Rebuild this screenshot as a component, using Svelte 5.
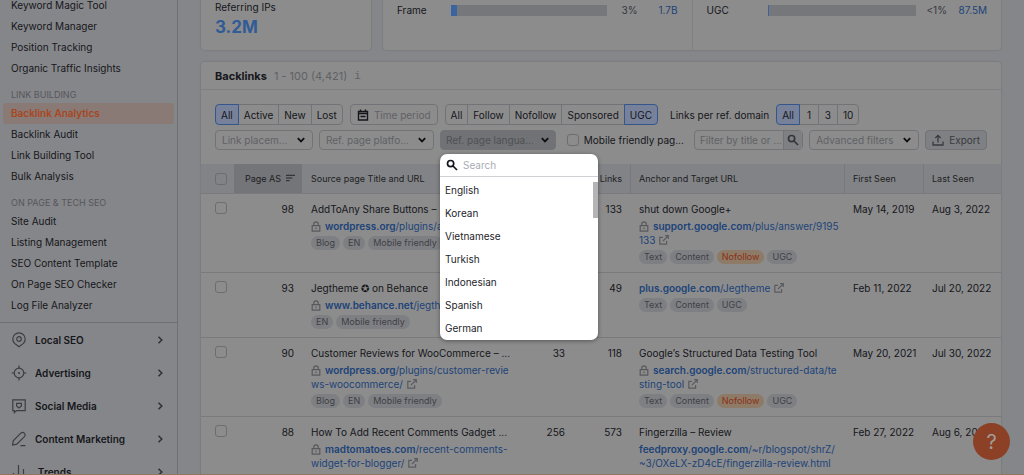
<script lang="ts">
  const navGroups = [
    { title: '', items: ['Keyword Magic Tool', 'Keyword Manager', 'Position Tracking', 'Organic Traffic Insights'] },
    { title: 'LINK BUILDING', items: ['Backlink Analytics', 'Backlink Audit', 'Link Building Tool', 'Bulk Analysis'] },
    {
      title: 'ON PAGE & TECH SEO',
      items: ['Site Audit', 'Listing Management', 'SEO Content Template', 'On Page SEO Checker', 'Log File Analyzer']
    }
  ];
  const activeItem = 'Backlink Analytics';

  const toolkits = [
    { name: 'Local SEO', icon: 'pin' },
    { name: 'Advertising', icon: 'target' },
    { name: 'Social Media', icon: 'chat' },
    { name: 'Content Marketing', icon: 'pencil' },
    { name: '.Trends', icon: 'bars' }
  ];

  const shares = [
    { label: 'Frame', share: 4, percent: '3%', total: '1.7B' },
    { label: 'UGC', share: 1, percent: '<1%', total: '87.5M' }
  ];

  const languages = ['English', 'Korean', 'Vietnamese', 'Turkish', 'Indonesian', 'Spanish', 'German'];

  const rows = [
    {
      score: 98,
      title: 'AddToAny Share Buttons –',
      domain: 'wordpress.org',
      path: '/plugins/a',
      secure: true,
      external: '',
      links: '133',
      tags: ['Blog', 'EN', 'Mobile friendly'],
      anchor: 'shut down Google+',
      targetDomain: 'support.google.com',
      targetPath: '/plus/answer/9195133',
      targetSecure: true,
      targetTags: ['Text', 'Content', 'Nofollow', 'UGC'],
      first: 'May 14, 2019',
      last: 'Aug 3, 2022'
    },
    {
      score: 93,
      title: 'Jegtheme ✪ on Behance',
      domain: 'www.behance.net',
      path: '/jegth',
      secure: true,
      external: '',
      links: '49',
      tags: ['EN', 'Mobile friendly'],
      anchor: '',
      targetDomain: 'plus.google.com',
      targetPath: '/Jegtheme',
      targetSecure: false,
      targetTags: ['Text', 'Content', 'UGC'],
      first: 'Feb 11, 2022',
      last: 'Jul 20, 2022'
    },
    {
      score: 90,
      title: 'Customer Reviews for WooCommerce – ...',
      domain: 'wordpress.org',
      path: '/plugins/customer-reviews-woocommerce/',
      secure: true,
      external: '33',
      links: '118',
      tags: ['Blog', 'EN', 'Mobile friendly'],
      anchor: 'Google’s Structured Data Testing Tool',
      targetDomain: 'search.google.com',
      targetPath: '/structured-data/testing-tool',
      targetSecure: true,
      targetTags: ['Text', 'Content', 'Nofollow', 'UGC'],
      first: 'May 20, 2021',
      last: 'Jul 30, 2022'
    },
    {
      score: 88,
      title: 'How To Add Recent Comments Gadget ...',
      domain: 'madtomatoes.com',
      path: '/recent-comments-widget-for-blogger/',
      secure: true,
      external: '256',
      links: '573',
      tags: [],
      anchor: 'Fingerzilla – Review',
      targetDomain: 'feedproxy.google.com',
      targetPath: '/~r/blogspot/shrZ/~3/OXeLX-zD4cE/fingerzilla-review.html',
      targetSecure: false,
      targetTags: [],
      first: 'Feb 27, 2022',
      last: 'Aug 6, 2022'
    }
  ];

  let status = $state('All');
  let follow = $state('UGC');
  let perDomain = $state('All');
  let languageOpen = $state(true);
</script>

{#snippet chevron()}
  <svg class="chevron" viewBox="0 0 10 10" aria-hidden="true"><path d="M1.8 3.2 5 6.5 8.2 3.2" /></svg>
{/snippet}

{#snippet magnifier()}
  <svg class="magnifier" viewBox="0 0 12 12" aria-hidden="true">
    <circle cx="4.6" cy="4.6" r="3.1" /><path d="M7 7l4 4" />
  </svg>
{/snippet}

{#snippet segments(label: string, options: string[], current: string, pick: (value: string) => void)}
  <div class="segments" role="group" aria-label={label}>
    {#each options as option}
      <button class:selected={option === current} aria-pressed={option === current} onclick={() => pick(option)}>
        {option}
      </button>
    {/each}
  </div>
{/snippet}

{#snippet picker(label: string)}
  <div class="picker">
    <select aria-label={label}><option>{label}</option></select>
    {@render chevron()}
  </div>
{/snippet}

{#snippet pageLink(domain: string, path: string, secure: boolean, external: boolean)}
  <div class="url">
    {#if secure}<svg class="lock" viewBox="0 0 10 11" aria-hidden="true"
        ><path d="M2.8 4.5V3a2.2 2.2 0 0 1 4.4 0v1.5M1.2 4.6h7.6v5.6H1.2zM5 6.4v1.8" /></svg
      >{/if}<a href="#top"><b>{domain}</b>{path}</a>{#if external}<svg class="out" viewBox="0 0 10 10" aria-hidden="true"
        ><path d="M4 2.4H.8v6.8h6.8V6M6 .7h3.3V4M9.2.8 4 6" /></svg
      >{/if}
  </div>
{/snippet}

{#snippet tagList(tags: string[])}
  <div class="tags">
    {#each tags as tag}
      <span class="tag" class:warn={tag === 'Nofollow'}>{tag}</span>
    {/each}
  </div>
{/snippet}

<div class="app" id="top">
  <nav class="sidebar" aria-label="Tools">
    <div class="groups">
      {#each navGroups as group}
        {#if group.title}<h2>{group.title}</h2>{/if}
        {#each group.items as item}
          <a href="#top" class:active={item === activeItem}>{item}</a>
        {/each}
      {/each}
    </div>
    {#each toolkits as kit}
      <button class="toolkit">
        <svg class="kit-icon" viewBox="0 0 16 16" aria-hidden="true">
          {#if kit.icon === 'pin'}
            <path d="M8 14.8 3.6 11.4A6.2 6.2 0 1 1 12.4 11.4z" />
            <circle cx="8" cy="7" r="2.3" />
          {:else if kit.icon === 'target'}
            <circle cx="8" cy="8" r="4.8" />
            <path d="M8 .6v3M8 12.4v3M.6 8h3M12.4 8h3" />
            <circle class="solid" cx="8" cy="8" r="1" />
          {:else if kit.icon === 'chat'}
            <path d="M1.8 1.8h12.4v10.8H5.5L3.4 14.6v-2H1.8z" />
            <path d="M8 10 5.6 8V5.4h4.8V8z" />
          {:else if kit.icon === 'pencil'}
            <path d="M1.6 14 2.2 9.8 9.8 2.2a2.4 2.4 0 0 1 3.6 3.4L5.8 13.2zM9.4 14.6h5" />
          {:else}
            <path d="M2.5 9v6M7.5 1v14M12.5 5v10" />
          {/if}
        </svg>
        <span>{kit.name}</span>
        <svg class="arrow" viewBox="0 0 10 10" aria-hidden="true"><path d="M3.5 1.8 6.8 5 3.5 8.2" /></svg>
      </button>
    {/each}
  </nav>

  <main>
    <div class="summary">
      <section class="card ips">
        <span>Referring IPs</span>
        <strong>3.2M</strong>
      </section>
      <section class="card shares">
        {#each shares as item}
          <div class="share">
            <span class="name">{item.label}</span>
            <span class="bar"><span class="fill" style="width: {item.share}%"></span></span>
            <span class="percent">{item.percent}</span>
            <a href="#top">{item.total}</a>
          </div>
        {/each}
      </section>
    </div>

    <section class="card backlinks">
      <header>
        <h1>Backlinks</h1>
        <span class="count">1 - 100 (4,421)</span>
        <span class="info">i</span>
      </header>

      <div class="filters">
        <div class="filter-row">
          {@render segments('Status', ['All', 'Active', 'New', 'Lost'], status, (v) => (status = v))}
          <button class="period">
            <svg viewBox="0 0 12 12" aria-hidden="true">
              <path d="M1.5 2.5h9V11h-9zM1.5 4.5h9M3.5.5V3M8.5.5V3M3.5 7.5h5" />
            </svg>
            Time period
          </button>
          {@render segments('Link type', ['All', 'Follow', 'Nofollow', 'Sponsored', 'UGC'], follow, (v) => (follow = v))}
          <span class="label">Links per ref. domain</span>
          {@render segments('Links per domain', ['All', '1', '3', '10'], perDomain, (v) => (perDomain = v))}
        </div>
        <div class="filter-row second">
          {@render picker('Link placem...')}
          {@render picker('Ref. page platfo...')}
          <div class="language">
            <button class="trigger" aria-expanded={languageOpen} onclick={() => (languageOpen = !languageOpen)}>
              <span>Ref. page langua...</span>
              {@render chevron()}
            </button>
            {#if languageOpen}
              <div class="menu">
                <label class="menu-search">
                  {@render magnifier()}
                  <input type="text" placeholder="Search" aria-label="Search" />
                </label>
                <div class="options" role="listbox" aria-label="Language">
                  {#each languages as language}
                    <button role="option" aria-selected="false">{language}</button>
                  {/each}
                  <span class="thumb"></span>
                </div>
              </div>
            {/if}
          </div>
          <label class="mobile"><input type="checkbox" />Mobile friendly pag...</label>
          <div class="find">
            <input type="text" placeholder="Filter by title or ..." aria-label="Filter by title or URL" />
            <button aria-label="Search">{@render magnifier()}</button>
          </div>
          {@render picker('Advanced filters')}
          <button class="export">
            <svg viewBox="0 0 12 12" aria-hidden="true">
              <path d="M1 7.5V11h10V7.5M6 8.5v-7M3.3 4 6 1.3 8.7 4" />
            </svg>
            Export
          </button>
        </div>
      </div>

      <table>
        <colgroup>
          <col class="c-check" /><col class="c-score" /><col /><col class="c-num" /><col class="c-num" /><col />
          <col class="c-first" /><col class="c-last" />
        </colgroup>
        <thead>
          <tr>
            <th class="check"><input type="checkbox" aria-label="Select all" /></th>
            <th class="sorted">
              Page AS
              <svg viewBox="0 0 10 8" aria-hidden="true"><path d="M0 1h10M0 4h7M0 7h4" /></svg>
            </th>
            <th>Source page Title and URL</th>
            <th class="num"></th>
            <th class="num">Links</th>
            <th class="divided">Anchor and Target URL</th>
            <th class="divided">First Seen</th>
            <th class="divided">Last Seen</th>
          </tr>
        </thead>
        <tbody>
          {#each rows as row}
            <tr>
              <td class="check"><input type="checkbox" aria-label="Select row" /></td>
              <td class="num">{row.score}</td>
              <td>
                <div class="title">{row.title}</div>
                {@render pageLink(row.domain, row.path, row.secure, row.external !== '')}
                {@render tagList(row.tags)}
              </td>
              <td class="num">{row.external}</td>
              <td class="num">{row.links}</td>
              <td>
                {#if row.anchor}<div class="title">{row.anchor}</div>{/if}
                {@render pageLink(row.targetDomain, row.targetPath, row.targetSecure, row.targetTags.length > 0)}
                {@render tagList(row.targetTags)}
              </td>
              <td class="date">{row.first}</td>
              <td class="date">{row.last}</td>
            </tr>
          {/each}
        </tbody>
      </table>
    </section>
  </main>

  <button class="help" aria-label="Help">?</button>
</div>

<style>
  :global(body) {
    background: #858689;
  }

  .app {
    --text: #15161b;
    --muted: #606165;
    --link: #1c4379;
    --line: #7a7a7c;
    --border: #727376;
    --surface: #8c8c8c;
    display: flex;
    height: 100vh;
    overflow: hidden;
    box-sizing: border-box;
    border-bottom: 1px solid #927660;
    color: var(--text);
    font: 10px/14px Inter, sans-serif;
  }

  button,
  input,
  select {
    box-sizing: border-box;
    margin: 0;
    padding: 0;
    border: 0;
    background: none;
    color: inherit;
    font: inherit;
  }

  a {
    color: var(--link);
    text-decoration: none;
  }

  svg {
    flex: none;
    fill: none;
    stroke: currentColor;
  }

  input[type='checkbox'] {
    appearance: none;
    flex: none;
    width: 12px;
    height: 12px;
    border: 1px solid #6c6d70;
    border-radius: 3px;
  }

  ::placeholder {
    color: var(--muted);
    opacity: 1;
  }

  .sidebar {
    flex: none;
    width: 177px;
    border-right: 1px solid #6f7073;
  }

  .groups {
    margin-top: -5px;
    padding: 0 3px 6px;
    border-bottom: 1px solid #6f7073;
  }

  .groups a {
    display: block;
    padding: 0 8px;
    border-radius: 3px;
    color: var(--text);
    line-height: 21px;
  }

  .groups a.active {
    background: #897a75;
    color: #a8461f;
    font-weight: 600;
  }

  .groups h2 {
    margin: 0;
    padding: 9px 8px 2px;
    color: #56575c;
    font-size: 9px;
    font-weight: 400;
    line-height: 13px;
  }

  .toolkit {
    display: flex;
    align-items: center;
    gap: 8px;
    width: 100%;
    height: 33px;
    padding: 0 12px 0 11px;
    font-weight: 600;
    text-align: left;
  }

  .toolkit span {
    flex: 1;
  }

  .kit-icon {
    width: 16px;
    height: 16px;
    color: #3c3d43;
    stroke-width: 1.2;
  }

  .kit-icon .solid {
    fill: currentColor;
    stroke: none;
  }

  .arrow {
    width: 10px;
    height: 10px;
    color: #2f3036;
    stroke-width: 1.5;
  }

  main {
    flex: 1;
    min-width: 0;
    padding: 0 23px;
  }

  .card {
    background: var(--surface);
    border-radius: 4px;
    box-shadow: 0 0 1px 1px rgba(20, 22, 30, 0.08);
  }

  .summary {
    display: flex;
    gap: 12px;
    height: 50px;
    margin-bottom: 12px;
  }

  .summary .card {
    border-radius: 0 0 4px 4px;
  }

  .ips {
    width: 170px;
    box-sizing: border-box;
    padding-left: 14px;
  }

  .ips span,
  .ips strong {
    display: block;
  }

  .ips strong {
    color: #315b96;
    font-size: 17px;
    font-weight: 700;
    line-height: 27px;
  }

  .shares {
    flex: 1;
    display: flex;
  }

  .share {
    flex: 1;
    display: flex;
    align-items: center;
    height: 20px;
    padding: 0 14px;
  }

  .share + .share {
    height: auto;
    padding-bottom: 30px;
    border-left: 1px solid #808083;
  }

  .share .name {
    width: 54px;
  }

  .share + .share .name {
    width: 61px;
  }

  .bar {
    flex: 1;
    height: 11px;
    background: #76777a;
  }

  .fill {
    display: block;
    height: 100%;
    background: #3a63a0;
  }

  .percent {
    width: 31px;
    color: #36373c;
    text-align: right;
  }

  .share a {
    width: 40px;
    text-align: right;
  }

  .backlinks header {
    display: flex;
    align-items: center;
    gap: 7px;
    height: 27px;
    padding: 0 14px;
    border-bottom: 1px solid #7f7f82;
  }

  h1 {
    margin: 0;
    font-size: 11px;
    font-weight: 700;
  }

  .count {
    color: var(--muted);
    font-size: 11px;
  }

  .info {
    color: var(--muted);
    font: 11px/14px 'Liberation Mono', monospace;
  }

  .filters {
    padding: 14px;
  }

  .filter-row {
    display: flex;
    align-items: center;
    gap: 7px;
    height: 21px;
    margin-bottom: 5px;
    white-space: nowrap;
  }

  .filter-row.second {
    gap: 6px;
    height: 20px;
    margin-bottom: 0;
  }

  .segments {
    display: flex;
    height: 21px;
  }

  .segments button {
    min-width: 20px;
    margin-left: -1px;
    padding: 0 5px;
    border: 1px solid var(--border);
  }

  .segments button:first-child {
    margin-left: 0;
    border-radius: 4px 0 0 4px;
  }

  .segments button:last-child {
    border-radius: 0 4px 4px 0;
  }

  .segments .selected {
    position: relative;
    background: #77829a;
    border-color: #34568a;
  }

  .period {
    display: flex;
    align-items: center;
    gap: 5px;
    height: 21px;
    padding: 0 6px;
    border: 1px solid var(--border);
    border-radius: 4px;
    color: var(--muted);
  }

  .period svg {
    width: 12px;
    height: 12px;
    color: var(--text);
    stroke-width: 1.4;
  }

  .label {
    padding-left: 5px;
  }

  .picker,
  .trigger,
  .find,
  .export {
    height: 20px;
    box-sizing: border-box;
    border: 1px solid var(--border);
    border-radius: 4px;
  }

  .picker {
    display: flex;
    align-items: center;
    padding-right: 6px;
  }

  .picker select {
    appearance: none;
    height: 18px;
    padding-left: 6px;
    padding-right: 8px;
    color: var(--muted);
  }

  .chevron {
    width: 10px;
    height: 10px;
    color: #0e0f13;
    stroke-width: 1.8;
  }

  .magnifier {
    width: 12px;
    height: 12px;
    stroke-width: 1.7;
  }

  .language {
    position: relative;
  }

  .trigger {
    display: flex;
    align-items: center;
    gap: 6px;
    padding: 0 5px;
    background: #717275;
    color: #4f5054;
  }

  .menu {
    position: absolute;
    top: 24px;
    left: 0;
    z-index: 2;
    width: 158px;
    overflow: hidden;
    border-radius: 7px;
    background: #fff;
    box-shadow: 0 1px 4px rgba(0, 0, 0, 0.4);
    color: #24252b;
  }

  .menu-search {
    display: flex;
    align-items: center;
    gap: 5px;
    height: 22px;
    padding: 0 6px;
    border-bottom: 1px solid #cfd0d4;
    color: #15161b;
  }

  .menu-search input {
    flex: 1;
    min-width: 0;
  }

  .menu-search input::placeholder {
    color: #a9abb4;
  }

  .options {
    position: relative;
    padding: 1px 0;
  }

  .options button {
    display: block;
    width: 100%;
    height: 23px;
    padding: 0 5px;
    text-align: left;
  }

  .thumb {
    position: absolute;
    top: 5px;
    right: 0;
    width: 5px;
    height: 36px;
    background: #b4b4b6;
  }

  .mobile {
    display: flex;
    align-items: center;
    gap: 5px;
    padding: 0 4px 0 5px;
  }

  .find {
    display: flex;
    flex: 1;
    min-width: 0;
  }

  .find input {
    flex: 1;
    min-width: 0;
    padding-left: 5px;
  }

  .find button {
    display: flex;
    align-items: center;
    justify-content: center;
    width: 19px;
    border-left: 1px solid var(--border);
    background: #7f8083;
    color: #35363b;
  }

  .export {
    display: flex;
    align-items: center;
    gap: 5px;
    padding: 0 6px;
    background: #7f8083;
    color: #393a40;
  }

  .export svg {
    width: 12px;
    height: 12px;
    stroke-width: 1.3;
  }

  table {
    width: 100%;
    table-layout: fixed;
    border-collapse: separate;
    border-spacing: 0;
  }

  .c-check {
    width: 33px;
  }

  .c-score {
    width: 68px;
  }

  .c-num {
    width: 57px;
  }

  .c-first {
    width: 79px;
  }

  .c-last {
    width: 78px;
  }

  th {
    height: 30px;
    box-sizing: border-box;
    padding: 0 8px 0 9px;
    background: #828386;
    border-bottom: 1px solid var(--line);
    color: #1d1e23;
    font-size: 9px;
    font-weight: 400;
    line-height: 14px;
    text-align: left;
    white-space: nowrap;
  }

  th.sorted {
    padding: 0 11px;
    background: #747578;
  }

  th.sorted svg {
    width: 9px;
    height: 8px;
    margin-left: 2px;
  }

  th.divided {
    padding-left: 8px;
    border-left: 1px solid #77787b;
  }

  td {
    padding: 8px 5px 8px 9px;
    border-bottom: 1px solid var(--line);
    vertical-align: top;
  }

  th.num,
  td.num {
    padding-left: 0;
    padding-right: 8px;
    text-align: right;
  }

  th.check,
  td.check {
    padding: 0 0 0 14px;
  }

  td.check {
    padding-top: 8px;
  }

  th.check input,
  td.check input {
    display: block;
  }

  td.date {
    padding-right: 0;
    white-space: nowrap;
  }

  .title {
    margin-bottom: 3px;
    white-space: nowrap;
  }

  .url {
    word-break: break-all;
  }

  .url b {
    font-weight: 600;
  }

  .lock {
    width: 10px;
    height: 11px;
    margin-right: 4px;
    color: #58595e;
    stroke-width: 1.2;
    vertical-align: -2px;
  }

  .out {
    width: 10px;
    height: 10px;
    margin-left: 4px;
    color: #5a5b5f;
    stroke-width: 1.2;
    vertical-align: -1px;
  }

  .tags {
    display: flex;
    gap: 3px;
    margin-top: 3px;
  }

  .tag {
    padding: 0 5px;
    border-radius: 7px;
    background: #7e7f82;
    color: #3f4046;
    font-size: 9px;
    line-height: 14px;
    white-space: nowrap;
  }

  .tag.warn {
    background: #8d7b68;
    color: #8c2f13;
  }

  .help {
    position: fixed;
    right: 14px;
    bottom: 15px;
    width: 37px;
    height: 37px;
    border-radius: 50%;
    background: #8c4026;
    color: #a39c99;
    font-size: 20px;
  }
</style>
